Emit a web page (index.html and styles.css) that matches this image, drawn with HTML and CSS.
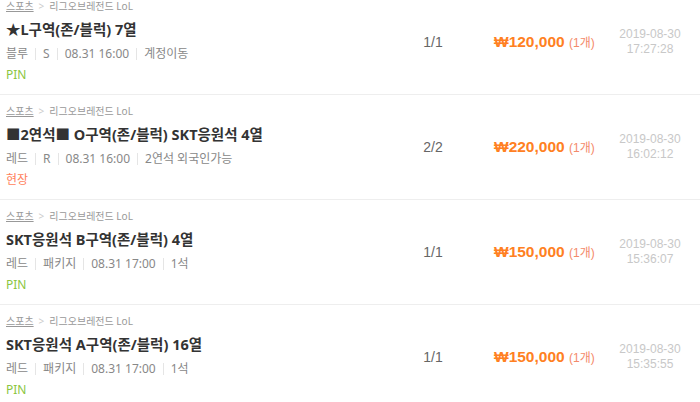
FILE: index.html
```html
<!DOCTYPE html>
<html lang="ko">
<head>
  <meta charset="UTF-8" />
  <title>판매내역</title>
  <link rel="stylesheet" href="styles.css">
</head>
<body>
  <ul class="deal-list">
    <li class="deal">
      <div class="info">
        <div class="category"><a href="#">스포츠</a><span class="arrow">&gt;</span>리그오브레전드 LoL</div>
        <div class="title">★L구역(존/블럭) 7열</div>
        <div class="meta"><span>블루</span><span>S</span><span>08.31 16:00</span><span>계정이동</span></div>
        <div class="tag pin">PIN</div>
      </div>
      <div class="qty">1/1</div>
      <div class="price">₩120,000 <small>(1개)</small></div>
      <div class="date">2019-08-30<br>17:27:28</div>
    </li>
    <li class="deal">
      <div class="info">
        <div class="category"><a href="#">스포츠</a><span class="arrow">&gt;</span>리그오브레전드 LoL</div>
        <div class="title">■2연석■ O구역(존/블럭) SKT응원석 4열</div>
        <div class="meta"><span>레드</span><span>R</span><span>08.31 16:00</span><span>2연석 외국인가능</span></div>
        <div class="tag onsite">현장</div>
      </div>
      <div class="qty">2/2</div>
      <div class="price">₩220,000 <small>(1개)</small></div>
      <div class="date">2019-08-30<br>16:02:12</div>
    </li>
    <li class="deal">
      <div class="info">
        <div class="category"><a href="#">스포츠</a><span class="arrow">&gt;</span>리그오브레전드 LoL</div>
        <div class="title">SKT응원석 B구역(존/블럭) 4열</div>
        <div class="meta"><span>레드</span><span>패키지</span><span>08.31 17:00</span><span>1석</span></div>
        <div class="tag pin">PIN</div>
      </div>
      <div class="qty">1/1</div>
      <div class="price">₩150,000 <small>(1개)</small></div>
      <div class="date">2019-08-30<br>15:36:07</div>
    </li>
    <li class="deal">
      <div class="info">
        <div class="category"><a href="#">스포츠</a><span class="arrow">&gt;</span>리그오브레전드 LoL</div>
        <div class="title">SKT응원석 A구역(존/블럭) 16열</div>
        <div class="meta"><span>레드</span><span>패키지</span><span>08.31 17:00</span><span>1석</span></div>
        <div class="tag pin">PIN</div>
      </div>
      <div class="qty">1/1</div>
      <div class="price">₩150,000 <small>(1개)</small></div>
      <div class="date">2019-08-30<br>15:35:55</div>
    </li>
  </ul>
</body>
</html>
```
FILE: styles.css
```css
body {
  margin: 0;
  background-color: #fff;
  font-family: "Noto Sans", "Noto Sans CJK KR", sans-serif;
  color: #333;
  overflow: hidden;
}

.deal-list {
  list-style: none;
  margin: -10px 0 0;
  padding: 0;
}

.deal {
  display: grid;
  grid-template-columns: 1fr 60px 142px 90px;
  align-items: center;
  height: 104px;
  padding: 0 5px 0 6px;
  border-bottom: 1px solid #eee;
}

.info {
  align-self: start;
  padding-top: 8px;
}

.category {
  font-size: 10px;
  line-height: 16px;
  color: #999;
}

.category a {
  color: #999;
  text-decoration: underline;
}

.category .arrow {
  color: #ccc;
  margin: 0 5px;
}

.title {
  margin-top: 3px;
  font-size: 14.5px;
  font-weight: bold;
  line-height: 24px;
  color: #333;
}

.meta {
  margin-top: 3px;
  font-size: 12px;
  line-height: 20px;
  color: #888;
}

.meta span + span::before {
  content: "";
  display: inline-block;
  width: 1px;
  height: 12px;
  margin: 0 7px;
  background-color: #e5e5e5;
  vertical-align: -2px;
}

.tag {
  margin-top: 2px;
  font-size: 12px;
  line-height: 18px;
}

.tag.pin {
  color: #8cc63f;
}

.tag.onsite {
  color: #ff7f5c;
}

.qty {
  text-align: center;
  font-family: "Liberation Sans", sans-serif;
  font-size: 14px;
  color: #666;
}

.price {
  padding-left: 31px;
  font-family: "Liberation Sans", "Noto Sans CJK KR", sans-serif;
  font-size: 15.5px;
  font-weight: bold;
  color: #ff8022;
  white-space: nowrap;
}

.price small {
  font-size: 12px;
  font-weight: normal;
  color: #f48a6a;
}

.date {
  text-align: center;
  font-family: "Liberation Sans", sans-serif;
  font-size: 12px;
  line-height: 15px;
  color: #c8c8c8;
}
```
